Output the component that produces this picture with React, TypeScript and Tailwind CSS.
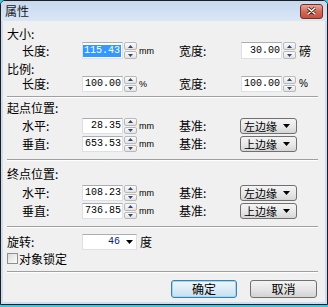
import React from "react";

const cjk = "font-['Noto_Sans_CJK_SC','Noto_Sans_CJK_JP',sans-serif]";

function Arrow({ up }: { up?: boolean }) {
  return (
    <svg width="5" height="3" viewBox="0 0 5 3">
      <path d={up ? "M2.5 0L5 3H0z" : "M0 0H5L2.5 3z"} fill="#34476a" />
    </svg>
  );
}

function Spin() {
  return (
    <div className="ml-[1px] flex h-full w-[13px] flex-col gap-px">
      <div className="flex flex-1 items-center justify-center rounded-[2px] border border-[#b9b9b9] bg-linear-to-b from-[#fbfbfb] to-[#e3e3e3]">
        <Arrow up />
      </div>
      <div className="flex flex-1 items-center justify-center rounded-[2px] border border-[#b9b9b9] bg-linear-to-b from-[#fbfbfb] to-[#e3e3e3]">
        <Arrow />
      </div>
    </div>
  );
}

function NumField({ value, selected }: { value: string; selected?: boolean }) {
  return (
    <div className="flex h-full w-[41px] items-center justify-end border border-[#dbdfe6] border-t-[#abadb3] bg-white pr-px font-['Liberation_Mono',monospace] text-[10px] leading-[12px] text-black">
      {selected ? <span className="bg-[#3399ff] px-px text-white">{value}</span> : value}
    </div>
  );
}

function Select({ value }: { value: string }) {
  return (
    <div className="flex h-full w-[57px] items-center justify-between rounded-[3px] border border-[#707070] bg-linear-to-b from-[#f4f4f4] via-[#e9e9e9] to-[#d6d6d6] pl-[3px] pr-[6px]">
      <span className={`${cjk} text-[11px] leading-[14px]`}>{value}</span>
      <svg width="7" height="4" viewBox="0 0 7 4">
        <path d="M0 0H7L3.5 4z" fill="#000" />
      </svg>
    </div>
  );
}

function Unit({ children }: { children: React.ReactNode }) {
  return <span className="ml-[2px] font-['Liberation_Sans',sans-serif] text-[9px] leading-[12px]">{children}</span>;
}

function Label({ children, w }: { children: React.ReactNode; w: string }) {
  return <span className={`${w} ${cjk} shrink-0 text-[12px] leading-[14px]`}>{children}</span>;
}

function Sep({ mt }: { mt: string }) {
  return <div className={`${mt} ml-[4px] mr-[7px] h-[2px] border-t border-b border-t-[#a0a0a0] border-b-white`} />;
}

function Heading({ children, mt }: { children: React.ReactNode; mt: string }) {
  return <div className={`${mt} pl-[4px] ${cjk} text-[12px] leading-[14px]`}>{children}</div>;
}

function NumRow({
  mt, h, l1, v1, u1, l2, v2, u2, sel,
}: {
  mt: string; h: string; l1: string; v1: string; u1: string; l2: string; v2: string; u2: string; sel?: boolean;
}) {
  return (
    <div className={`${mt} ${h} flex items-center pl-[19px]`}>
      <div className="flex h-full w-[157px] items-center">
        <Label w="w-[60px]">{l1}</Label>
        <NumField value={v1} selected={sel} />
        <Spin />
        <Unit>{u1}</Unit>
      </div>
      <Label w="w-[62px]">{l2}</Label>
      <NumField value={v2} />
      <Spin />
      <span className={`ml-[3px] ${u2 === "%" ? "font-['Liberation_Sans',sans-serif] text-[10px]" : `${cjk} text-[12px]`} leading-[14px]`}>{u2}</span>
    </div>
  );
}

function PosRow({ mt, l1, v1, v2 }: { mt: string; l1: string; v1: string; v2: string }) {
  return (
    <div className={`${mt} flex h-[16px] items-center pl-[19px]`}>
      <div className="flex h-full w-[157px] items-center">
        <Label w="w-[60px]">{l1}</Label>
        <NumField value={v1} />
        <Spin />
        <Unit>mm</Unit>
      </div>
      <Label w="w-[61px]">基准:</Label>
      <Select value={v2} />
    </div>
  );
}

export default function App() {
  return (
    <div className="h-[307px] w-[328px] bg-[#3fc8e4]">
      <div className="flex h-[305px] w-[328px] flex-col overflow-hidden rounded-t-[5px] border border-[#1e1e1e] bg-[#cddcf0] text-black">
        <div className="flex h-[20px] shrink-0 items-center justify-between bg-linear-to-b from-[#c6d9f0] to-[#dae6f5] pl-[4px] pr-[4px]">
          <span className={`${cjk} text-[12px] leading-[14px] text-[#1b1b1b]`}>属性</span>
          <div className="flex h-[15px] w-[23px] items-center justify-center rounded-[3px] border border-[#7a2f25] bg-linear-to-b from-[#e9a698] via-[#d36a58] to-[#c44f3c]">
            <svg width="9" height="8" viewBox="0 0 9 8">
              <path d="M1 1L8 7M8 1L1 7" stroke="#5a1d14" strokeWidth="3" strokeLinecap="round" />
              <path d="M1 1L8 7M8 1L1 7" stroke="#fff" strokeWidth="1.6" strokeLinecap="round" />
            </svg>
          </div>
        </div>
        <div className="mx-[2px] mb-[2px] flex flex-1 flex-col bg-[#f0f0f0]">
          <Heading mt="mt-[6px]">大小:</Heading>
          <NumRow mt="mt-[1px]" h="h-[17px]" l1="长度:" v1="115.43" u1="mm" l2="宽度:" v2="30.00" u2="磅" sel />
          <Heading mt="mt-[3px]">比例:</Heading>
          <NumRow mt="mt-0" h="h-[16px]" l1="长度:" v1="100.00" u1="%" l2="宽度:" v2="100.00" u2="%" />
          <Sep mt="mt-[4px]" />
          <Heading mt="mt-[3px]">起点位置:</Heading>
          <PosRow mt="mt-[3px]" l1="水平:" v1="28.35" v2="左边缘" />
          <PosRow mt="mt-[2px]" l1="垂直:" v1="653.53" v2="上边缘" />
          <Sep mt="mt-[7px]" />
          <Heading mt="mt-[6px]">终点位置:</Heading>
          <PosRow mt="mt-[4px]" l1="水平:" v1="108.23" v2="左边缘" />
          <PosRow mt="mt-[2px]" l1="垂直:" v1="736.85" v2="上边缘" />
          <Sep mt="mt-[7px]" />
          <div className="mt-[6px] flex h-[16px] items-center pl-[4px]">
            <Label w="w-[75px]">旋转:</Label>
            <div className="flex h-full w-[55px] items-center border border-[#dbdfe6] border-t-[#abadb3] bg-white">
              <span className="flex-1 pr-[2px] text-right font-['Liberation_Mono',monospace] text-[10px] leading-[12px] text-[#10206a]">46</span>
              <div className="flex w-[14px] justify-center">
                <svg width="7" height="4" viewBox="0 0 7 4">
                  <path d="M0 0H7L3.5 4z" fill="#000" />
                </svg>
              </div>
            </div>
            <span className={`ml-[3px] ${cjk} text-[12px] leading-[14px]`}>度</span>
          </div>
          <div className="mt-[2px] flex h-[13px] items-center pl-[4px]">
            <div className="h-[11px] w-[11px] border border-[#8f8f8f] bg-linear-to-br from-[#dcdcdc] to-[#fbfbfb]" />
            <span className={`ml-px ${cjk} text-[12px] leading-[14px]`}>对象锁定</span>
          </div>
          <Sep mt="mt-[6px]" />
          <div className="mt-[7px] flex h-[18px] pl-[168px]">
            <div className={`flex w-[66px] items-center justify-center rounded-[3px] border border-[#3c7fb1] bg-linear-to-b from-[#eef7fc] via-[#dcecf6] to-[#c7e0f0] ${cjk} text-[12px] leading-[14px] shadow-[inset_0_0_0_1px_#9fd8f4]`}>
              确定
            </div>
            <div className={`ml-[13px] flex w-[67px] items-center justify-center rounded-[3px] border border-[#707070] bg-linear-to-b from-[#f3f3f3] via-[#e6e6e6] to-[#d3d3d3] ${cjk} text-[12px] leading-[14px]`}>
              取消
            </div>
          </div>
        </div>
      </div>
    </div>
  );
}
